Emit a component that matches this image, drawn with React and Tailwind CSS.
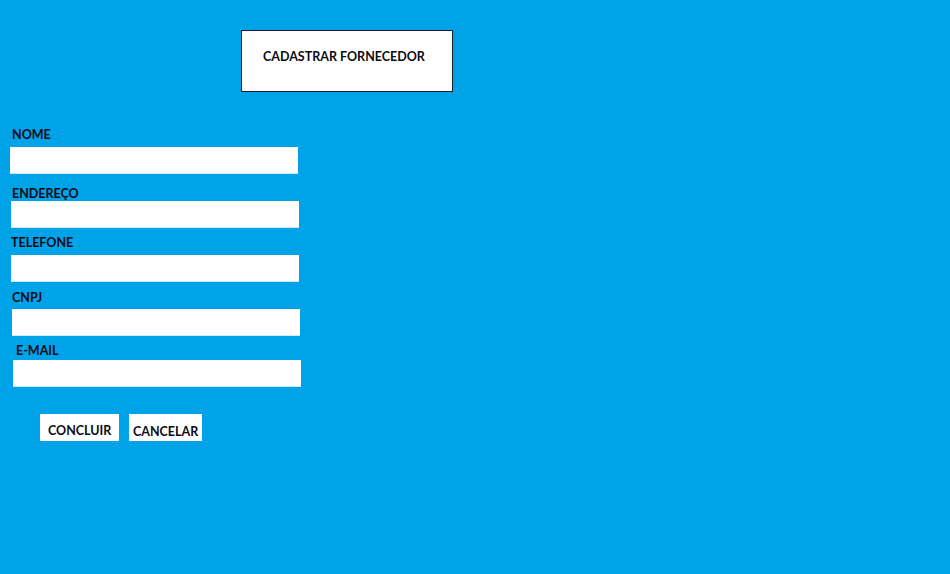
import React from "react";

const fields = [
  { label: "NOME", gap: "mt-[35px]", labelMl: "ml-[12px]", inputMt: "mt-[4px]", inputMl: "ml-[10px]" },
  { label: "ENDEREÇO", gap: "mt-[12px]", labelMl: "ml-[12px]", inputMt: "-mt-[1px]", inputMl: "ml-[11px]" },
  { label: "TELEFONE", gap: "mt-[7px]", labelMl: "ml-[11px]", inputMt: "mt-[4px]", inputMl: "ml-[11px]" },
  { label: "CNPJ", gap: "mt-[8px]", labelMl: "ml-[12px]", inputMt: "mt-[3px]", inputMl: "ml-[12px]" },
  { label: "E-MAIL", gap: "mt-[7px]", labelMl: "ml-[16px]", inputMt: "mt-[1px]", inputMl: "ml-[13px]" },
];

const CadastroFornecedor = () => {
  return (
    <div
      className="w-full h-[574px] bg-[#00a2e8] overflow-hidden pt-[30px] text-[#0b0b14]"
      style={{ fontFamily: "Lato, 'Open Sans', sans-serif" }}
    >
      <div className="ml-[241px] w-[212px] h-[62px] bg-white border border-[#1a1a2a] flex items-center pl-[21px]">
        <span className="text-[12.5px] font-bold leading-4 -mt-[8px]">
          CADASTRAR FORNECEDOR
        </span>
      </div>

      <form className="flex flex-col">
        {fields.map((f) => (
          <div key={f.label} className={`flex flex-col ${f.gap}`}>
            <label className={`text-[12.5px] font-bold leading-4 ${f.labelMl}`}>
              {f.label}
            </label>
            <input
              type="text"
              className={`w-[288px] h-[27px] bg-white outline-none border-b border-[#c8ecfb] px-2 text-sm ${f.inputMt} ${f.inputMl}`}
            />
          </div>
        ))}

        <div className="flex items-start mt-[27px] ml-[40px] gap-[10px]">
          <button
            type="button"
            className="w-[79px] bg-white text-[12.5px] font-bold leading-4 text-left pl-[8px] pt-[9px] pb-[2px]"
          >
            CONCLUIR
          </button>
          <button
            type="button"
            className="w-[73px] bg-white text-[12.5px] font-bold leading-4 text-left pl-[4px] pt-[10px] pb-[1px]"
          >
            CANCELAR
          </button>
        </div>
      </form>
    </div>
  );
};

export default CadastroFornecedor;
